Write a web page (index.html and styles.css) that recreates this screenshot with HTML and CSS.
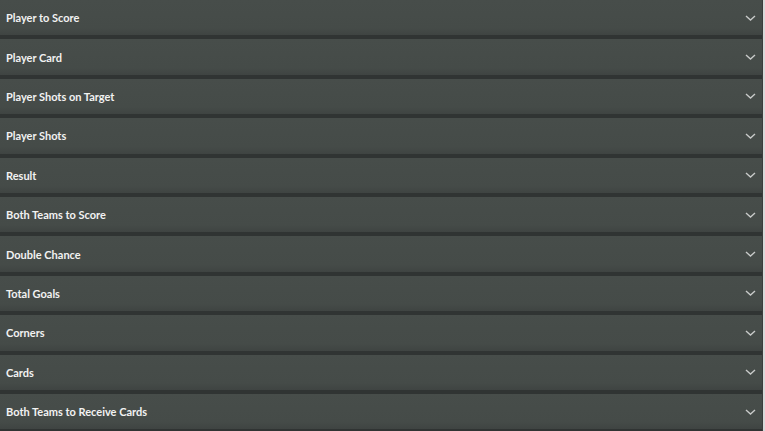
FILE: index.html
```html
<!DOCTYPE html>
<html>
<head>
<meta charset="utf-8">
<link rel="stylesheet" href="styles.css">
</head>
<body>
<div class="list">
  <div class="row"><span class="label">Player to Score</span><svg class="chev" viewBox="0 0 11 6"><path d="M1 1l4.5 4 4.5-4"/></svg></div>
  <div class="row"><span class="label">Player Card</span><svg class="chev" viewBox="0 0 11 6"><path d="M1 1l4.5 4 4.5-4"/></svg></div>
  <div class="row"><span class="label">Player Shots on Target</span><svg class="chev" viewBox="0 0 11 6"><path d="M1 1l4.5 4 4.5-4"/></svg></div>
  <div class="row"><span class="label">Player Shots</span><svg class="chev" viewBox="0 0 11 6"><path d="M1 1l4.5 4 4.5-4"/></svg></div>
  <div class="row"><span class="label">Result</span><svg class="chev" viewBox="0 0 11 6"><path d="M1 1l4.5 4 4.5-4"/></svg></div>
  <div class="row"><span class="label">Both Teams to Score</span><svg class="chev" viewBox="0 0 11 6"><path d="M1 1l4.5 4 4.5-4"/></svg></div>
  <div class="row"><span class="label">Double Chance</span><svg class="chev" viewBox="0 0 11 6"><path d="M1 1l4.5 4 4.5-4"/></svg></div>
  <div class="row"><span class="label">Total Goals</span><svg class="chev" viewBox="0 0 11 6"><path d="M1 1l4.5 4 4.5-4"/></svg></div>
  <div class="row"><span class="label">Corners</span><svg class="chev" viewBox="0 0 11 6"><path d="M1 1l4.5 4 4.5-4"/></svg></div>
  <div class="row"><span class="label">Cards</span><svg class="chev" viewBox="0 0 11 6"><path d="M1 1l4.5 4 4.5-4"/></svg></div>
  <div class="row"><span class="label">Both Teams to Receive Cards</span><svg class="chev" viewBox="0 0 11 6"><path d="M1 1l4.5 4 4.5-4"/></svg></div>
</div>
</body>
</html>
```
FILE: styles.css
```css
html, body {
  margin: 0;
  padding: 0;
  background: #d9d9d9;
}
.list {
  width: 763px;
  height: 431px;
  overflow: hidden;
  background: #303433;
  display: flex;
  flex-direction: column;
  gap: 4px;
  border-right: 1px solid #3a3d3c;
  box-sizing: border-box;
}
.row {
  flex: 0 0 35.4px;
  display: flex;
  align-items: center;
  justify-content: space-between;
  padding: 0 6px 0 6px;
  background: linear-gradient(#474d4a, #454b48 80%, #3f4442);
  font-family: Lato, "Open Sans", sans-serif;
  font-weight: 700;
  font-size: 11px;
  color: #f2f2f2;
}
.chev {
  width: 11px;
  height: 6px;
  fill: none;
  stroke: #c8cac9;
  stroke-width: 1.4;
}
```
